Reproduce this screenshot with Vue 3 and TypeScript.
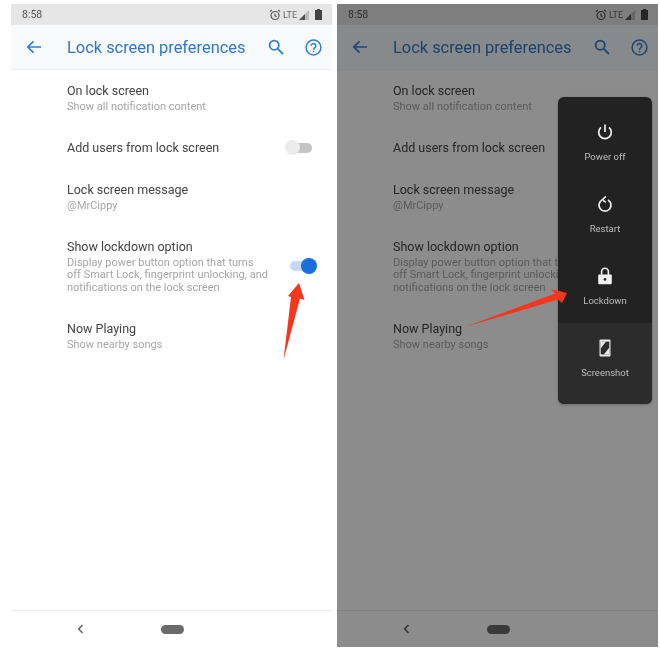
<script setup lang="ts">
interface Row { title: string; sub?: string[]; toggle?: 'on' | 'off' }
const rows: Row[] = [
  { title: 'On lock screen', sub: ['Show all notification content'] },
  { title: 'Add users from lock screen', toggle: 'off' },
  { title: 'Lock screen message', sub: ['@MrCippy'] },
  { title: 'Show lockdown option', sub: ['Display power button option that turns', 'off Smart Lock, fingerprint unlocking, and', 'notifications on the lock screen'], toggle: 'on' },
  { title: 'Now Playing', sub: ['Show nearby songs'] },
]
const phones = [{ dim: false }, { dim: true }]
</script>

<template>
  <div class="page">
    <section v-for="(p, i) in phones" :key="i" class="phone">
      <div class="status">
        <span class="time">8:58</span>
        <span class="status-icons">
          <svg width="12" height="12" viewBox="0 0 12 12" fill="none" stroke="#555" stroke-width="1.2"><circle cx="6" cy="6.5" r="4"/><path d="M6 4.5V6.8L7.5 7.6M1 2.6 2.8 1M11 2.6 9.2 1"/></svg>
          <span class="lte">LTE</span>
          <svg width="10" height="10" viewBox="0 0 10 10"><path d="M0 10 10 0V10Z" fill="#bbb"/><path d="M0 10 6 4V10Z" fill="#555"/></svg>
          <svg class="batt" width="7" height="11" viewBox="0 0 7 11"><path d="M2 0H5V1H7V11H0V1H2Z" fill="#444"/></svg>
        </span>
      </div>
      <header class="bar">
        <svg class="back" width="16" height="14" viewBox="0 0 16 14" fill="none" stroke="#2f7fd0" stroke-width="1.7"><path d="M15 7H2M7.5 1.3 1.8 7l5.7 5.7"/></svg>
        <h1>Lock screen preferences</h1>
        <svg class="search" width="16" height="16" viewBox="0 0 16 16" fill="none" stroke="#2f7fd0" stroke-width="1.8"><circle cx="6.2" cy="6.2" r="4.6"/><path d="m9.6 9.6 5.4 5.4"/></svg>
        <svg class="help" width="17" height="17" viewBox="0 0 17 17" fill="none" stroke="#2f7fd0" stroke-width="1.5"><circle cx="8.5" cy="8.5" r="7.4"/><path d="M6.2 6.8a2.3 2.3 0 1 1 3.6 1.9c-.9.6-1.3 1-1.3 2"/><path d="M8.5 11.8v1.5"/></svg>
      </header>
      <main class="list">
        <div v-for="r in rows" :key="r.title" class="row">
          <div class="text">
            <div class="title">{{ r.title }}</div>
            <div v-for="s in r.sub" :key="s" class="sub">{{ s }}</div>
          </div>
          <span v-if="r.toggle" class="toggle" :class="r.toggle"><i></i></span>
        </div>
      </main>
      <footer class="nav">
        <svg width="7" height="10" viewBox="0 0 7 10" fill="none" stroke="#666" stroke-width="1.6"><path d="M5.5 1 1.7 5l3.8 4"/></svg>
        <span class="pill"></span>
      </footer>

      <template v-if="p.dim">
        <div class="scrim"></div>
        <div class="menu">
          <div class="menu-top">
            <div class="menu-item">
              <svg width="18" height="18" viewBox="0 0 18 18" fill="none" stroke="#eee" stroke-width="1.7"><path d="M9 1.5v7.5"/><path d="M5 4.4a6.3 6.3 0 1 0 8 0"/></svg>
              <span>Power off</span>
            </div>
            <div class="menu-item">
              <svg width="18" height="18" viewBox="0 0 18 18" fill="none" stroke="#eee" stroke-width="1.7"><path d="M6 4.9A6 6 0 1 0 12 4.9"/><path d="M9.8 1.4 6.4 4.6l3.4 2.8" stroke-width="1.5"/></svg>
              <span>Restart</span>
            </div>
            <div class="menu-item">
              <svg width="18" height="18" viewBox="0 0 18 18"><path d="M5.6 8V4.6a3.4 3.4 0 0 1 6.8 0V8" fill="none" stroke="#f2f2f2" stroke-width="1.6"/><rect x="2.2" y="7.6" width="13.6" height="9.6" rx="1" fill="#f2f2f2"/><circle cx="9" cy="12.4" r="1.3" fill="#222"/></svg>
              <span>Lockdown</span>
            </div>
          </div>
          <div class="menu-item shot">
            <svg width="18" height="18" viewBox="0 0 18 18"><rect x="3.5" y="0.5" width="11" height="17" rx="1" fill="#e8e8e8"/><rect x="4.7" y="2.6" width="8.6" height="12.8" fill="#2b2b2b"/><path d="M4.7 2.6h5.4L4.7 9.4ZM13.3 15.4H7.9l5.4-6.8Z" fill="#e8e8e8"/></svg>
            <span>Screenshot</span>
          </div>
        </div>
      </template>
    </section>

    <svg class="arrow a1" width="40" height="90" viewBox="0 0 40 90"><path d="M19 3 24.5 20 20 18.5 3.5 80 11 17 8 16Z" fill="#f4361c"/></svg>
    <svg class="arrow a2" width="110" height="50" viewBox="0 0 110 50"><path d="M105 8 100 18 96 14.5 3 42 93 8.5 89 4Z" fill="#f4361c"/></svg>
  </div>
</template>

<style>
html, body { margin: 0; background: #fff; }
</style>

<style scoped>
.page {
  position: relative;
  width: 660px;
  height: 651px;
  padding: 4px 2px 4px 11px;
  box-sizing: border-box;
  display: flex;
  gap: 5px;
  overflow: hidden;
  font-family: Roboto, "Liberation Sans", sans-serif;
  background: #fff;
  filter: blur(0.35px);
}
.phone {
  position: relative;
  width: 321px;
  height: 643px;
  display: flex;
  flex-direction: column;
  background: #fff;
  flex: none;
}
.status {
  height: 21px;
  background: #e6e6e6;
  display: flex;
  align-items: center;
  justify-content: space-between;
  padding: 0 10px 0 11px;
  color: #555;
  font-size: 10.5px;
}
.status-icons { display: flex; align-items: center; gap: 2px; }
.lte { font-size: 9px; color: #666; }
.batt { margin-left: 4px; }
.bar {
  height: 45px;
  background: #f8fafd;
  border-bottom: 1px solid #efefef;
  box-sizing: border-box;
  display: flex;
  align-items: center;
  padding: 0 10px 0 15px;
}
.bar h1 {
  margin: 0 0 0 25px;
  flex: 1;
  font-size: 16.4px;
  font-weight: 400;
  color: #2f78c8;
  white-space: nowrap;
}
.help { margin-left: 21px; }
.list {
  flex: 1;
  display: flex;
  flex-direction: column;
  gap: 26px;
  padding: 13px 15px 0 56px;
}
.row { display: flex; align-items: center; justify-content: space-between; }
.title { font-size: 12.5px; line-height: 16px; color: #444; }
.sub { font-size: 11px; line-height: 12.75px; color: #a6a6a6; }
.title + .sub { margin-top: 2px; }
.toggle { position: relative; display: block; width: 22px; height: 10px; border-radius: 5px; margin-right: 5px; }
.toggle i { position: absolute; top: -3px; width: 15px; height: 15px; border-radius: 50%; }
.toggle.off { background: #c4c4c4; }
.toggle.off i { left: -5px; background: #ececec; }
.toggle.on { background: #c7d9f5; top: -1px; }
.toggle.on i { right: -5px; top: -3px; width: 16px; height: 16px; background: #1a6fe0; }
.nav {
  height: 37px;
  border-top: 1px solid #ececec;
  box-sizing: border-box;
  display: flex;
  align-items: center;
  padding-left: 66px;
  gap: 77px;
}
.pill { width: 23px; height: 9px; border-radius: 5px; background: #6a6a6a; }
.scrim { position: absolute; inset: 0; background: rgba(0, 0, 0, 0.45); }
.menu {
  position: absolute;
  left: 221px;
  top: 93px;
  width: 94px;
  height: 307px;
  border-radius: 6px;
  overflow: hidden;
  background: #222;
  display: flex;
  flex-direction: column;
  box-shadow: 0 1px 3px rgba(0, 0, 0, 0.25);
}
.menu-top { padding-bottom: 10px; }
.menu-item {
  height: 72px;
  display: flex;
  flex-direction: column;
  align-items: center;
  gap: 10px;
  padding-top: 26px;
  box-sizing: border-box;
  color: #bdbdbd;
  font-size: 9.5px;
}
.menu-item.shot { flex: 1; height: auto; background: #2c2c2c; padding-top: 16px; }
.arrow { position: absolute; }
.a1 { left: 280px; top: 280px; }
.a2 { left: 462px; top: 285px; }
</style>
